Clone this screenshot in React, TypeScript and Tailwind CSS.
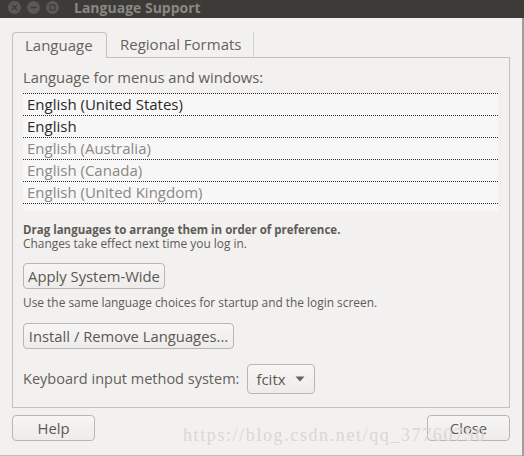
import React from 'react';

const languages = [
  { name: 'English (United States)', active: true },
  { name: 'English', active: true },
  { name: 'English (Australia)', active: false },
  { name: 'English (Canada)', active: false },
  { name: 'English (United Kingdom)', active: false },
];

const font = { fontFamily: '"Open Sans", "DejaVu Sans", sans-serif' };

const GtkButton: React.FC<{ label: string; className?: string }> = ({ label, className = '' }) => (
  <button
    className={`h-[26px] rounded-[4px] border border-[#b9b7b3] bg-gradient-to-b from-[#f7f6f5] to-[#edecea] text-[14.8px] leading-none text-[#5b5853] ${className}`}
  >
    {label}
  </button>
);

const App: React.FC = () => {
  return (
    <div className="flex h-[456px] w-[524px] overflow-hidden bg-[#f2f1f0]" style={font}>
      <div className="relative flex w-[522px] flex-col bg-[#f2f1f0]">
        {/* Title bar */}
        <div className="flex h-[18px] items-start bg-[#3c3b37]">
          <div className="ml-[8px] mt-[1px] flex gap-[6px]">
            <span className="flex h-[13px] w-[13px] items-center justify-center rounded-full bg-[#5a5955]">
              <svg width="7" height="7" viewBox="0 0 7 7">
                <path d="M1 1L6 6M6 1L1 6" stroke="#3c3b37" strokeWidth="1.4" />
              </svg>
            </span>
            <span className="flex h-[13px] w-[13px] items-center justify-center rounded-full bg-[#5a5955]">
              <svg width="7" height="7" viewBox="0 0 7 7">
                <path d="M0.5 3.5H6.5" stroke="#3c3b37" strokeWidth="1.4" />
              </svg>
            </span>
            <span className="flex h-[13px] w-[13px] items-center justify-center rounded-full bg-[#5a5955]">
              <svg width="7" height="7" viewBox="0 0 7 7">
                <rect x="1" y="1" width="5" height="5" fill="none" stroke="#3c3b37" strokeWidth="1.2" />
              </svg>
            </span>
          </div>
          <span className="ml-[15px] text-[14px] font-bold leading-[16px] text-[#8a8782]">
            Language Support
          </span>
        </div>

        {/* Body */}
        <div className="flex flex-col pl-[12px] pt-[14px]">
          <div className="flex h-[25px] items-stretch">
            <div className="relative z-10 -mb-px flex w-[95px] items-center rounded-t-[4px] border border-b-0 border-[#c4c2bf] bg-[#f2f1f0] pl-[12px] text-[15px] text-[#66625d]">
              Language
            </div>
            <div className="flex w-[147px] items-center border-r border-[#d4d2cf] pl-[13px] text-[15px] text-[#66625d]">
              Regional Formats
            </div>
          </div>

          <div className="flex h-[351px] w-[498px] flex-col border border-[#c4c2bf] pl-[10px] pr-[11px] pt-[9px]">
            <div className="text-[14.8px] leading-[20px] text-[#625f5a]">Language for menus and windows:</div>
            <div className="mt-[6px] flex h-[118px] flex-col border-t border-dotted border-[#2e2e2e] bg-[#f7f7f7]">
              {languages.map((l) => (
                <div
                  key={l.name}
                  className={`flex h-[22px] shrink-0 items-center border-b border-dotted border-[#2e2e2e] pl-[4px] text-[15px] ${
                    l.active ? 'text-[#2b2a28]' : 'text-[#8c8883]'
                  }`}
                >
                  {l.name}
                </div>
              ))}
            </div>

            <div className="mt-[12px] text-[11.5px] font-bold leading-[14px] text-[#5e5b56]">
              Drag languages to arrange them in order of preference.
            </div>
            <div className="text-[11.9px] leading-[13px] text-[#5e5b56]">Changes take effect next time you log in.</div>

            <GtkButton label="Apply System-Wide" className="mt-[13px] w-[142px] self-start" />

            <div className="mt-[7px] text-[11.9px] leading-[13px] text-[#5e5b56]">
              Use the same language choices for startup and the login screen.
            </div>

            <GtkButton label="Install / Remove Languages..." className="mt-[14px] w-[211px] self-start" />

            <div className="mt-[15px] flex items-center gap-[8px]">
              <span className="text-[14.5px] text-[#625f5a]">Keyboard input method system:</span>
              <div className="flex h-[30px] w-[68px] items-center justify-between rounded-[4px] border border-[#b9b7b3] bg-gradient-to-b from-[#f7f6f5] to-[#edecea] pl-[8px] pr-[9px] text-[15px] text-[#5b5853]">
                <span>fcitx</span>
                <svg width="10" height="6" viewBox="0 0 10 6">
                  <path d="M0.5 0.5H9.5L5 5.5Z" fill="#66625d" />
                </svg>
              </div>
            </div>
          </div>

          <div className="mt-[7px] flex w-[498px] justify-between">
            <GtkButton label="Help" className="w-[83px]" />
            <GtkButton label="Close" className="w-[83px]" />
          </div>
        </div>

        <div className="mt-auto h-px w-full bg-[#bdbcba]" />

        {/* watermark overlay */}
        <div
          className="pointer-events-none absolute left-[183px] top-[424px] text-[18px] leading-[22px] tracking-[1.6px] text-[#dad7d3]"
          style={{ fontFamily: '"Liberation Serif", serif' }}
        >
          https://blog.csdn.net/qq_37760750
        </div>
      </div>
      <div className="flex w-[2px] flex-col bg-[#9f9f9e]">
        <div className="h-[18px] bg-[#3c3b37]" />
      </div>
    </div>
  );
};

export default App;
